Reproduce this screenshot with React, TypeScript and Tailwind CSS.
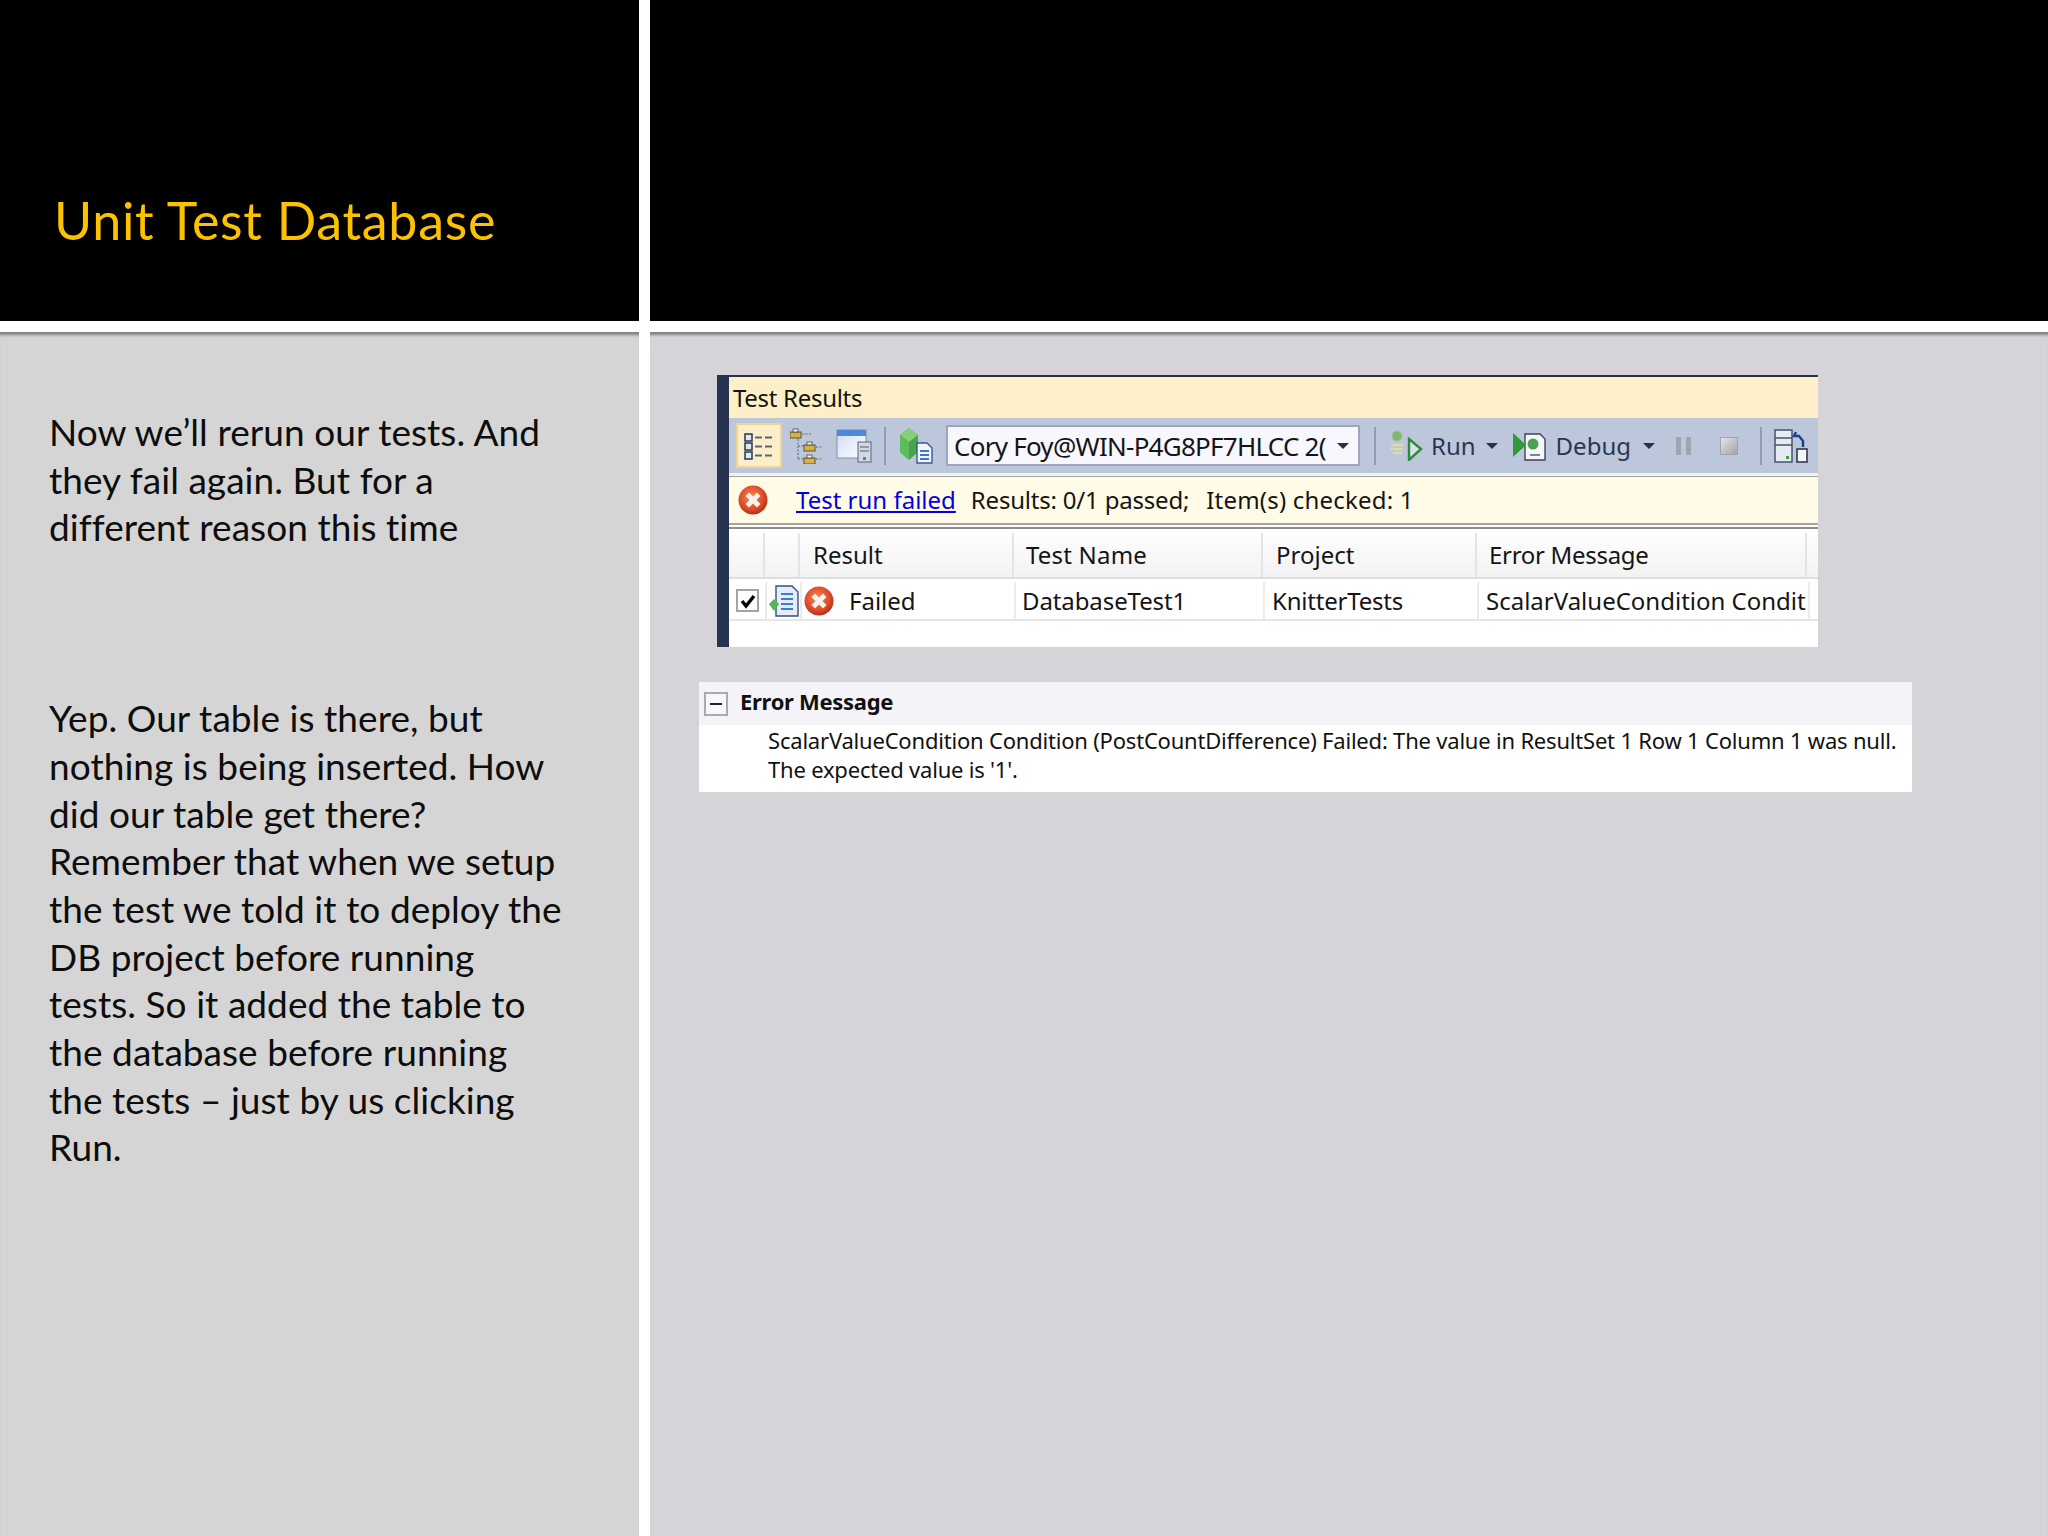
import { useId } from "react";

// Slide: left column is the notes, right column holds two pasted VS screenshots.

function ErrorIcon({ className }: { className: string }) {
  const id = useId();
  return (
    <svg viewBox="0 0 30 30" className={className}>
      <defs>
        <radialGradient id={id} cx="45%" cy="40%" r="60%">
          <stop offset="0%" stopColor="#f5885a" />
          <stop offset="70%" stopColor="#de4a26" />
          <stop offset="100%" stopColor="#b5301a" />
        </radialGradient>
      </defs>
      <circle cx="15" cy="15" r="14.5" fill={`url(#${id})`} />
      <path d="M11 11l8 8M19 11l-8 8" stroke="#fff" strokeWidth="5" strokeLinecap="square" opacity="0.9" />
    </svg>
  );
}

function ListIcon() {
  return (
    <svg viewBox="0 0 30 30" className="h-[30px] w-[30px]">
      {[3, 12, 21].map((y) => (
        <g key={y}>
          <rect x="1" y={y} width="7" height="7" fill="#dfe7f5" stroke="#27364f" strokeWidth="1.5" />
          <path d={`M11 ${y + 3.5}h7M21 ${y + 3.5}h7`} stroke="#5d6470" strokeWidth="2" />
        </g>
      ))}
    </svg>
  );
}

function TreeIcon() {
  return (
    <svg viewBox="0 0 34 36" className="h-[36px] w-[34px]">
      <path d="M12 6h9M8 11v20M8 18h6M8 31h6M26 19h7M26 31h7" stroke="#7d8490" strokeWidth="1.5" strokeDasharray="2 1.5" fill="none" />
      {[[0, 1], [14, 14], [14, 27]].map(([x, y]) => (
        <g key={`${x}-${y}`}>
          <rect x={x} y={y + 3} width="11" height="6" fill="#d9b23e" stroke="#55523a" />
          <rect x={x + 3} y={y} width="5" height="3" fill="#f4f1e2" stroke="#4a4a4a" strokeWidth="0.8" />
        </g>
      ))}
    </svg>
  );
}

function WindowServerIcon() {
  const id = useId();
  return (
    <svg viewBox="0 0 36 34" className="h-[34px] w-[36px]">
      <defs>
        <linearGradient id={id} x1="0" y1="0" x2="1" y2="1">
          <stop offset="0%" stopColor="#cfdcf5" />
          <stop offset="100%" stopColor="#ffffff" />
        </linearGradient>
      </defs>
      <rect x="1" y="1" width="29" height="28" fill={`url(#${id})`} stroke="#7f8fae" />
      <rect x="1" y="1" width="29" height="6" fill="#4f88d8" />
      <rect x="22" y="13" width="13" height="20" fill="#d3d8e2" stroke="#5a6478" />
      <path d="M24 18h9M24 22h9" stroke="#7a8496" strokeWidth="1.5" />
      <rect x="27" y="28" width="3" height="3" fill="#2fa84a" />
    </svg>
  );
}

function DatabaseDocIcon() {
  return (
    <svg viewBox="0 0 34 36" className="h-[36px] w-[34px]">
      <path d="M10 0l9 7v17l-9 8-9-8V7z" fill="#46a548" />
      <path d="M10 0l9 7-9 7-9-7z" fill="#86d077" />
      <path d="M10 14v18l-9-8V7z" fill="#5fbc5b" />
      <path d="M18 15h10l5 5v15H18z" fill="#f3f6fc" stroke="#3a5a8c" strokeWidth="1.4" />
      <path d="M21 23h9M21 27h9M21 31h9" stroke="#3f78c8" strokeWidth="2" />
    </svg>
  );
}

function RunIcon() {
  return (
    <svg viewBox="0 0 33 31" className="h-[31px] w-[33px]">
      <circle cx="7" cy="6" r="5" fill="#7fb870" stroke="#b0c08a" />
      <path d="M1 15h12M1 19h12M3 23h9" stroke="#dfdf9c" strokeWidth="2" />
      <path d="M19 9l12 10-12 11z" fill="#d8e2ea" stroke="#2f8a3a" strokeWidth="2.4" />
    </svg>
  );
}

function DebugIcon() {
  return (
    <svg viewBox="0 0 34 31" className="h-[31px] w-[34px]">
      <path d="M13 4h15l5 5v21H13z" fill="#f4f6fb" stroke="#3b4658" strokeWidth="1.4" />
      <path d="M1 3l13 12L1 27z" fill="#2f9a36" />
      <circle cx="21" cy="14" r="5.5" fill="#4f9f55" />
      <path d="M18 25h10" stroke="#7b8494" strokeWidth="2" />
    </svg>
  );
}

function ServerUndoIcon() {
  return (
    <svg viewBox="0 0 34 34" className="h-[34px] w-[34px]">
      <rect x="1" y="1" width="17" height="32" fill="#e6eaf2" stroke="#47536a" strokeWidth="1.5" />
      <path d="M1 9h17M1 16h17" stroke="#47536a" strokeWidth="1.4" />
      <rect x="12" y="27" width="3" height="3" fill="#35a74a" />
      <path d="M22 3l-2 4 5 0 4 5v6" stroke="#1c3f91" strokeWidth="2.4" fill="none" />
      <rect x="23" y="20" width="10" height="13" fill="#f3f5f9" stroke="#303a4c" strokeWidth="1.6" />
    </svg>
  );
}

function DocRowIcon() {
  return (
    <svg viewBox="0 0 30 32" className="h-[32px] w-[30px]">
      <path d="M7 1h16l6 6v24H7z" fill="#e6edf9" stroke="#35507e" strokeWidth="1.4" />
      <path d="M12 9h12M12 14h12M12 19h12M12 24h12" stroke="#3b7fd0" strokeWidth="2.2" />
      <path d="M5 14l5 5-5 7-5-7z" fill="#56b260" />
    </svg>
  );
}

function Arrow() {
  return <span className="block h-0 w-0 border-x-[6px] border-t-[6px] border-x-transparent border-t-[#27313f]" />;
}

function Sep() {
  return <span className="block h-[38px] w-[2px] bg-[#8f9bb0]" />;
}

function TestResultsShot() {
  return (
    <div className="ml-[67px] mt-[43px] flex h-[272px] w-[1101px] flex-col border-t-2 border-l-[12px] border-[#26344f] bg-white text-[24px] leading-none text-[#151515]">
      <div className="flex h-[41px] items-center bg-[#fdf0c8] pl-[4px] tracking-[-0.3px]">Test Results</div>

      <div className="flex h-[55px] items-center bg-[#bcc7dc] pl-[7px]">
        <span className="flex h-[45px] w-[46px] items-center justify-center border-2 border-[#eed48d] bg-[#fdeecb]">
          <ListIcon />
        </span>
        <span className="ml-[8px]"><TreeIcon /></span>
        <span className="ml-[12px]"><WindowServerIcon /></span>
        <span className="ml-[12px]"><Sep /></span>
        <span className="ml-[13px]"><DatabaseDocIcon /></span>
        <div className="ml-[13px] flex h-[41px] w-[414px] items-center border-2 border-[#9aa6c0] bg-[#f7f7fd] pl-[6px] text-[26px] tracking-[-0.75px]">
          <span className="w-[379px] whitespace-nowrap">Cory Foy@WIN-P4G8PF7HLCC 2(</span>
          <span className="ml-[4px]"><Arrow /></span>
        </div>
        <span className="ml-[14px]"><Sep /></span>
        <span className="ml-[14px]"><RunIcon /></span>
        <span className="ml-[8px] text-[#2a3650]">Run</span>
        <span className="ml-[10px]"><Arrow /></span>
        <span className="ml-[14px]"><DebugIcon /></span>
        <span className="ml-[10px] text-[#2a3650]">Debug</span>
        <span className="ml-[12px]"><Arrow /></span>
        <span className="ml-[21px] flex h-[18px] w-[15px] justify-between">
          <span className="w-[5px] bg-[#9ea5b0]" />
          <span className="w-[5px] bg-[#9ea5b0]" />
        </span>
        <span className="ml-[29px] h-[18px] w-[18px] border border-[#a0a4ac] bg-gradient-to-br from-[#e4e5e8] to-[#a2a4a8]" />
        <span className="ml-[22px]"><Sep /></span>
        <span className="ml-[12px]"><ServerUndoIcon /></span>
      </div>

      <div className="h-[4px] border-t-[3px] border-b border-t-[#eef1f6] border-b-[#a8a49a]" />
      <div className="flex h-[46px] items-center bg-[#fffbe6] pl-[9px]">
        <ErrorIcon className="h-[30px] w-[30px]" />
        <a className="ml-[28px] text-[#0000e0] underline">Test run failed</a>
        <span className="ml-[15px] tracking-[-0.2px]">Results: 0/1 passed;</span>
        <span className="ml-[17px] tracking-[0.2px]">Item(s) checked: 1</span>
      </div>
      <div className="h-[6px] border-y-2 border-t-[#a8a49a] border-b-[#8c8c8c] bg-white" />

      <div className="grid h-[50px] grid-cols-[35px_35px_214px_249px_214px_330px_1fr] border-b-2 border-[#dfdfdf] bg-gradient-to-b from-white to-[#f2f2f2] pl-[1px] pt-[4px]">
        <div className="border-r-2 border-[#e4e4e4]" />
        <div className="border-r-2 border-[#e4e4e4]" />
        <div className="flex items-center border-r-2 border-[#e4e4e4] pl-[13px]">Result</div>
        <div className="flex items-center border-r-2 border-[#e4e4e4] pl-[12px] tracking-[0.2px]">Test Name</div>
        <div className="flex items-center border-r-2 border-[#e4e4e4] pl-[13px]">Project</div>
        <div className="flex items-center border-r-2 border-[#e4e4e4] pl-[12px] tracking-[-0.3px]">Error Message</div>
        <div />
      </div>

      <div className="grid h-[42px] grid-cols-[37px_35px_214px_249px_214px_331px_1fr] border-b-2 border-[#e6e6e6] pl-[1px] pt-[3px]">
        <div className="flex items-center border-r-2 border-[#ececec] pl-[6px]">
          <span className="flex h-[23px] w-[23px] items-center justify-center border-2 border-[#a4a4a4]">
            <svg viewBox="0 0 16 16" className="h-[16px] w-[16px]">
              <path d="M2 8l4 5 8-10" stroke="#000" strokeWidth="3.4" fill="none" />
            </svg>
          </span>
        </div>
        <div className="flex items-center border-r-2 border-[#ececec] pl-[2px]"><DocRowIcon /></div>
        <div className="flex items-center border-r-2 border-[#ececec] pl-[2px]">
          <ErrorIcon className="h-[30px] w-[30px]" />
          <span className="ml-[15px]">Failed</span>
        </div>
        <div className="flex items-center border-r-2 border-[#ececec] pl-[6px] tracking-[-0.1px]">DatabaseTest1</div>
        <div className="flex items-center border-r-2 border-[#ececec] pl-[7px] tracking-[-0.2px]">KnitterTests</div>
        <div className="flex items-center whitespace-nowrap border-r-2 border-[#ececec] pl-[7px]">ScalarValueCondition Condit</div>
        <div />
      </div>
    </div>
  );
}

function ErrorMessageShot() {
  return (
    <div className="ml-[49px] mt-[35px] flex h-[110px] w-[1213px] flex-col bg-white text-[#111]">
      <div className="flex h-[43px] items-center bg-[#f4f3f8] pb-[5px] pl-[5px]">
        <span className="mt-[5px] flex h-[24px] w-[24px] items-center justify-center border-2 border-[#a9a9b2] bg-[#f8f8fb]">
          <span className="h-[2px] w-[12px] bg-[#222]" />
        </span>
        <span className="ml-[12px] text-[22px] font-bold tracking-[-0.3px]">Error Message</span>
      </div>
      <div className="pl-[69px] pt-[1px] text-[22px] leading-[29px] tracking-[-0.2px]">
        <div className="whitespace-nowrap">ScalarValueCondition Condition (PostCountDifference) Failed: The value in ResultSet 1 Row 1 Column 1 was null.</div>
        <div className="whitespace-nowrap">The expected value is '1'.</div>
      </div>
    </div>
  );
}

export default function App() {
  return (
    <div className="grid h-[1536px] w-[2048px] grid-cols-[639px_1398px] grid-rows-[321px_1204px] gap-x-[11px] gap-y-[11px] overflow-hidden bg-white font-['Noto_Sans',sans-serif]">
      <div className="bg-black pl-[54px] pt-[187px] font-['Lato',sans-serif] text-[52px] leading-[66px] tracking-[0.7px] text-[#fcc200]">
        Unit Test Database
      </div>
      <div className="bg-black" />

      <div className="bg-[#d5d5d5] pl-[49px] pt-[76px] font-['Lato',sans-serif] text-[37px] leading-[47.7px] tracking-[0.05px] text-[#0d0d0d] shadow-[inset_0_5px_3px_-2px_#808080]">
        <p>
          Now we’ll rerun our tests. And
          <br />
          they fail again. But for a
          <br />
          different reason this time
        </p>
        <p className="mt-[143px]">
          Yep. Our table is there, but
          <br />
          nothing is being inserted. How
          <br />
          did our table get there?
          <br />
          Remember that when we setup
          <br />
          the test we told it to deploy the
          <br />
          DB project before running
          <br />
          tests. So it added the table to
          <br />
          the database before running
          <br />
          the tests – just by us clicking
          <br />
          Run.
        </p>
      </div>

      <div className="overflow-hidden bg-[#d6d4d8] shadow-[inset_0_5px_3px_-2px_#808080]">
        <TestResultsShot />
        <ErrorMessageShot />
      </div>
    </div>
  );
}
